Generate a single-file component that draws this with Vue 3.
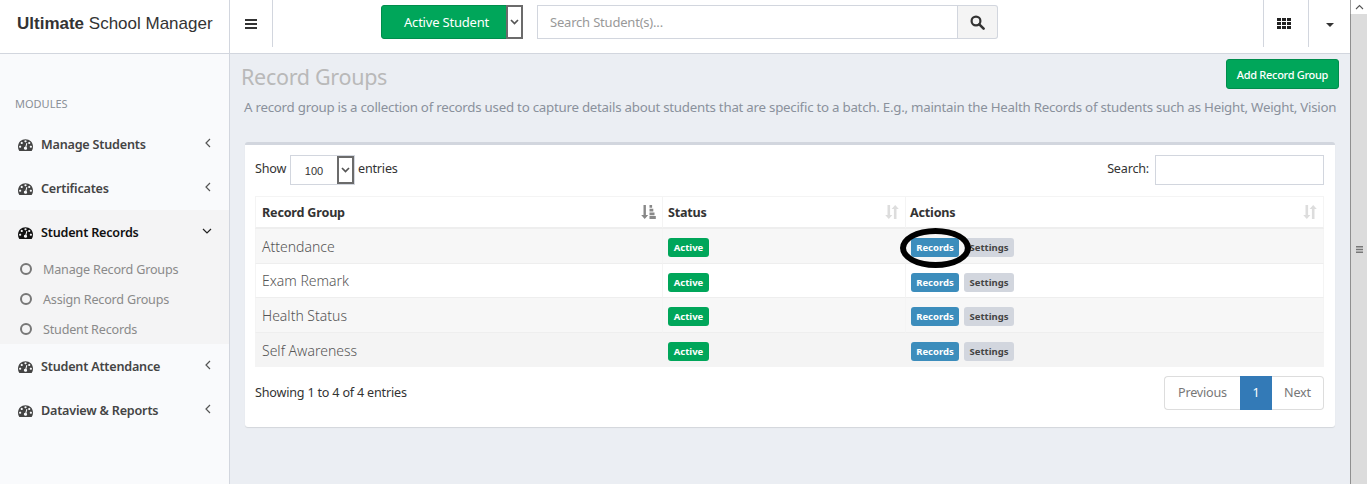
<script setup>
const gauge = "M384 1152q0-53-37.5-90.5t-90.5-37.5-90.5 37.5-37.5 90.5 37.5 90.5 90.5 37.5 90.5-37.5 37.5-90.5zm192-448q0-53-37.5-90.5t-90.5-37.5-90.5 37.5-37.5 90.5 37.5 90.5 90.5 37.5 90.5-37.5 37.5-90.5zm428 481l101-382q6-26-7.5-48.5t-38.5-29.5-48 6.5-30 39.5l-101 382q-60 5-107 43.5t-63 98.5q-20 77 20 146t117 89 146-20 89-117q16-60-6-117t-72-91zm660-33q0-53-37.5-90.5t-90.5-37.5-90.5 37.5-37.5 90.5 37.5 90.5 90.5 37.5 90.5-37.5 37.5-90.5zm-640-640q0-53-37.5-90.5t-90.5-37.5-90.5 37.5-37.5 90.5 37.5 90.5 90.5 37.5 90.5-37.5 37.5-90.5zm448 192q0-53-37.5-90.5t-90.5-37.5-90.5 37.5-37.5 90.5 37.5 90.5 90.5 37.5 90.5-37.5 37.5-90.5zm320 448q0 261-141 483-19 29-54 29h-1402q-35 0-54-29-141-221-141-483 0-182 71-348t191-286 286-191 348-71 348 71 286 191 191 286 71 348z"
const rows = ['Attendance', 'Exam Remark', 'Health Status', 'Self Awareness']
const before = ['Manage Students', 'Certificates']
const sub = ['Manage Record Groups', 'Assign Record Groups', 'Student Records']
const after = ['Student Attendance', 'Dataview & Reports']
</script>

<template>
  <div class="page">
    <div class="viewport">
      <header class="topbar">
        <div class="brand"><b>Ultimate</b> School Manager</div>
        <div class="toggle">
          <svg width="12" height="10" viewBox="0 0 12 10"><path d="M0 0h12v2H0zM0 4h12v2H0zM0 8h12v2H0z" fill="#333"/></svg>
        </div>
        <div class="filter">
          <div class="active-select">
            <span class="active-label">Active Student</span>
            <span class="arrow-box arrow-dark">
              <svg width="9" height="6" viewBox="0 0 9 6"><path d="M1 1l3.5 3.5L8 1" fill="none" stroke="#555" stroke-width="1.7"/></svg>
            </span>
          </div>
          <div class="search-group">
            <div class="search-input">Search Student(s)...</div>
            <div class="search-btn">
              <svg width="15" height="15" viewBox="0 0 15 15"><circle cx="6" cy="6" r="4.4" fill="none" stroke="#333" stroke-width="2.2"/><path d="M9.3 9.3l4.3 4.3" stroke="#333" stroke-width="2.6" stroke-linecap="round"/></svg>
            </div>
          </div>
        </div>
        <div class="top-right">
          <div class="top-cell apps">
            <svg width="14" height="11" viewBox="0 0 14 11"><path d="M0 0h4v3H0zM5 0h4v3H5zM10 0h4v3h-4zM0 4h4v3H0zM5 4h4v3H5zM10 4h4v3h-4zM0 8h4v3H0zM5 8h4v3H5zM10 8h4v3h-4z" fill="#222"/></svg>
          </div>
          <div class="top-cell user">
            <svg width="8" height="4" viewBox="0 0 8 4"><path d="M0 0h8L4 4z" fill="#333"/></svg>
          </div>
        </div>
      </header>

      <div class="body">
        <aside class="sidebar">
          <div class="modules">MODULES</div>
          <a v-for="m in before" :key="m" class="nav-item">
            <svg class="gauge" viewBox="0 0 1792 1792"><path :d="gauge" fill-rule="evenodd"/></svg>
            <span class="nav-label">{{ m }}</span>
            <svg class="chev" width="6" height="10" viewBox="0 0 6 10"><path d="M5 1L1 5l4 4" fill="none" stroke="#555" stroke-width="1.2"/></svg>
          </a>
          <div class="nav-open">
            <a class="nav-item current">
              <svg class="gauge" viewBox="0 0 1792 1792"><path :d="gauge" fill-rule="evenodd"/></svg>
              <span class="nav-label">Student Records</span>
              <svg class="chev" width="10" height="6" viewBox="0 0 10 6"><path d="M1 1l4 4 4-4" fill="none" stroke="#222" stroke-width="1.2"/></svg>
            </a>
            <a v-for="s in sub" :key="s" class="sub-item">
              <span class="ring"></span>
              <span>{{ s }}</span>
            </a>
          </div>
          <a v-for="m in after" :key="m" class="nav-item">
            <svg class="gauge" viewBox="0 0 1792 1792"><path :d="gauge" fill-rule="evenodd"/></svg>
            <span class="nav-label">{{ m }}</span>
            <svg class="chev" width="6" height="10" viewBox="0 0 6 10"><path d="M5 1L1 5l4 4" fill="none" stroke="#555" stroke-width="1.2"/></svg>
          </a>
        </aside>

        <main class="content">
          <div class="title-row">
            <h1 class="title">Record Groups</h1>
            <button class="add-btn">Add Record Group</button>
          </div>
          <p class="desc">A record group is a collection of records used to capture details about students that are specific to a batch. E.g., maintain the Health Records of students such as Height, Weight, Vision</p>

          <section class="box">
            <div class="controls">
              <div class="length">
                <span class="ctl-text show">Show</span>
                <div class="len-select">
                  <span class="len-value">100</span>
                  <span class="arrow-box">
                    <svg width="9" height="6" viewBox="0 0 9 6"><path d="M1 1l3.5 3.5L8 1" fill="none" stroke="#555" stroke-width="1.7"/></svg>
                  </span>
                </div>
                <span class="ctl-text">entries</span>
              </div>
              <div class="filter-box">
                <span class="ctl-text">Search:</span>
                <div class="filter-input"></div>
              </div>
            </div>

            <table class="table">
              <colgroup><col class="c1"><col class="c2"><col></colgroup>
              <thead>
                <tr>
                  <th>
                    <div class="th-in">Record Group
                      <svg class="sort" width="15" height="14" viewBox="0 0 15 14"><path d="M2.5 0h2.4v10h2.3L3.700 14 .2 10h2.300zM8.500 0h2.600v2.800H8.500zM8.500 3.700h3.800v2.800H8.500zM8.500 7.400h5v2.800h-5zM8.500 11.100h6.300v2.800H8.500z" fill="#888"/></svg>
                    </div>
                  </th>
                  <th>
                    <div class="th-in">Status
                      <svg class="sort" width="14" height="14" viewBox="0 0 14 14"><path d="M2.500 0h2.600v10H7.400l-3.600 4-3.600-4h2.300zM8.900 14V4H6.600L10.200 0l3.600 4h-2.300v10z" fill="#ddd"/></svg>
                    </div>
                  </th>
                  <th>
                    <div class="th-in">Actions
                      <svg class="sort" width="14" height="14" viewBox="0 0 14 14"><path d="M2.500 0h2.600v10H7.400l-3.600 4-3.600-4h2.300zM8.900 14V4H6.600L10.200 0l3.600 4h-2.300v10z" fill="#ddd"/></svg>
                    </div>
                  </th>
                </tr>
              </thead>
              <tbody>
                <tr v-for="(r, i) in rows" :key="r" :class="{ odd: i % 2 === 0, last: i === 3 }">
                  <td class="name">{{ r }}</td>
                  <td><span class="label green">Active</span></td>
                  <td>
                    <span class="label blue">Records<span v-if="i === 0" class="ellipse"></span></span>
                    <span class="label grey">Settings</span>
                  </td>
                </tr>
              </tbody>
            </table>

            <div class="foot">
              <span class="foot-text">Showing 1 to 4 of 4 entries</span>
              <div class="pager">
                <span class="pg prev">Previous</span>
                <span class="pg cur">1</span>
                <span class="pg next">Next</span>
              </div>
            </div>
          </section>
        </main>
      </div>
    </div>

    <div class="scrollbar">
      <div class="sb-up">
        <svg width="9" height="6" viewBox="0 0 9 6"><path d="M1 5l3.500-3.500L8 5" fill="none" stroke="#555" stroke-width="1.1"/></svg>
      </div>
      <div class="sb-thumb">
        <svg width="7" height="7" viewBox="0 0 7 7"><path d="M0 0h7v1.400H0zM0 2.800h7v1.400H0zM0 5.600h7V7H0z" fill="#777"/></svg>
      </div>
    </div>
  </div>
</template>

<style>
html, body { margin: 0; overflow: hidden; }
</style>

<style scoped>
.page { display: flex; width: 1367px; height: 484px; overflow: hidden; font-family: "Noto Sans", "Open Sans", sans-serif; font-size: 12.6px; letter-spacing: -0.2px; color: #333; }
.viewport { width: 1350px; display: flex; flex-direction: column; }
.topbar { height: 53px; display: flex; background: #fff; border-bottom: 1px solid #d2d6de; flex: none; }
.brand { width: 229px; border-right: 1px solid #d2d6de; font-family: "Liberation Sans", sans-serif; font-size: 17px; letter-spacing: 0; color: #333; line-height: 47px; text-indent: 17px; white-space: nowrap; }
.toggle { width: 42px; height: 47px; border-right: 1px solid #d2d6de; display: flex; align-items: center; justify-content: center; }
.filter { display: flex; margin: 5px 0 0 108px; gap: 14px; height: 34px; }
.active-select { width: 142px; box-sizing: border-box; background: #00a65a; border: 1px solid #008d4c; border-radius: 3px; display: flex; color: #fff; font-size: 13px; }
.active-label { flex: 1; text-align: center; line-height: 32px; padding-left: 5px; }
.arrow-box { width: 17px; box-sizing: border-box; background: #fff; border: 2px solid #6b6b6b; display: flex; align-items: center; justify-content: center; }
.arrow-dark { margin: -1px -1px -1px 0; }
.search-group { display: flex; width: 461px; }
.search-input { flex: 1; border: 1px solid #d2d6de; padding-left: 12px; line-height: 32px; color: #999; font-size: 13px; }
.search-btn { width: 40px; box-sizing: border-box; border: 1px solid #d2d6de; border-left: 0; background: #f4f4f4; border-radius: 0 3px 3px 0; display: flex; align-items: center; justify-content: center; }
.top-right { margin-left: auto; display: flex; }
.top-cell { height: 47px; border-left: 1px solid #d2d6de; display: flex; align-items: center; justify-content: center; }
.apps { width: 45px; padding-right: 4px; box-sizing: border-box; }
.user { width: 42px; padding-top: 3px; box-sizing: border-box; }
.body { flex: 1; display: flex; min-height: 0; }
.sidebar { width: 229px; flex: none; background: #f9fafc; border-right: 1px solid #d2d6de; }
.modules { margin-top: 41px; height: 27px; padding-left: 15px; font-size: 11px; letter-spacing: 0; line-height: 17px; color: #8a8f97; }
.nav-item { height: 44px; display: flex; align-items: center; padding: 0 18px; font-weight: 600; color: #444; }
.nav-item.current { color: #111; }
.gauge { width: 15px; height: 15px; fill: currentColor; margin-right: 8px; flex: none; }
.nav-label { flex: 1; white-space: nowrap; }
.chev { flex: none; margin-top: -2px; }
.nav-open { background: #f4f4f5; }
.nav-open .chev { margin-right: -1px; }
.sub-item { height: 30px; display: flex; align-items: center; padding-left: 20px; color: #8a8a8a; }
.ring { width: 12px; height: 12px; box-sizing: border-box; border: 2px solid #777; border-radius: 50%; margin-right: 11px; margin-top: -1px; flex: none; }
.content { flex: 1; background: #ebeef3; padding: 5px 11px 0 14px; min-width: 0; }
.title-row { display: flex; justify-content: space-between; height: 36px; }
.title { margin: 4px 0 0 -3px; font-size: 21.5px; letter-spacing: -0.3px; font-weight: 400; color: #b9b9b9; line-height: 28px; }
.add-btn { width: 113px; height: 30px; padding: 0; background: #00a65a; border: 1px solid #008d4c; border-radius: 3px; color: #fff; font: inherit; font-size: 11px; letter-spacing: -0.3px; font-weight: 500; }
.desc { margin: 0; padding-top: 2px; font-size: 13.3px; letter-spacing: -0.248px; line-height: 20px; color: #8a919c; white-space: nowrap; }
.box { width: 1090px; margin: 25px 0 0 1px; box-sizing: border-box; height: 285px; background: #fff; border-top: 3px solid #d2d6de; border-radius: 3px; box-shadow: 0 1px 1px rgba(0,0,0,.1); padding: 10px 11px 10px 10px; }
.controls { display: flex; justify-content: space-between; align-items: center; height: 30px; }
.length, .filter-box { display: flex; align-items: center; }
.ctl-text { margin-top: -3px; }
.show { width: 35px; }
.len-select { width: 65px; height: 30px; box-sizing: border-box; border: 1px solid #d2d6de; display: flex; margin-right: 3px; }
.len-value { flex: 1; text-align: center; font-size: 11px; letter-spacing: 0; line-height: 30px; font-family: "Liberation Sans", sans-serif; }
.filter-input { width: 167px; height: 28px; border: 1px solid #d2d6de; margin-left: 6px; }
.table { width: 1069px; margin-top: 11px; border-collapse: separate; border-spacing: 0; table-layout: fixed; }
.c1 { width: 407px; }
.c2 { width: 243px; }
th { height: 33px; padding: 0; text-align: left; border-top: 1px solid #f4f4f4; border-left: 1px solid #f4f4f4; border-bottom: 2px solid #eee; font-weight: 700; box-sizing: border-box; }
th:last-child { border-right: 1px solid #f4f4f4; }
.th-in { display: flex; justify-content: space-between; align-items: center; padding: 0 6px 0 5px; }
th:first-child .th-in { padding-left: 6px; }
th:last-child .th-in { padding-left: 4px; }
td { height: 34.5px; padding: 0 5px; border-left: 1px solid #f4f4f4; border-bottom: 1px solid #eee; box-sizing: border-box; letter-spacing: 0; }
td:first-child { padding-left: 6px; }
td:last-child { border-right: 1px solid #f4f4f4; }
tr.odd td { background: #f7f7f7; }
tr.last td { background: #f4f4f4; border-bottom: 0; }
.name { font-size: 14px; color: #555; font-weight: 300; padding-top: 1px; }
.label { display: inline-block; height: 19px; line-height: 19px; border-radius: 3px; font-size: 9.5px; font-weight: 700; color: #fff; vertical-align: middle; position: relative; text-align: center; margin-top: 4px; }
.green { background: #00a65a; width: 41px; }
.blue { background: #3c8dbc; width: 48px; }
.grey { background: #d2d6de; color: #444; margin-left: 5px; width: 50px; }
.ellipse { position: absolute; z-index: 2; left: -11px; top: -10px; width: 71px; height: 40px; box-sizing: border-box; border: 6px solid #000; border-radius: 50%; pointer-events: none; }
.foot { display: flex; justify-content: space-between; margin-top: 9px; align-items: center; height: 34px; }
.foot-text { margin-top: -2px; }
.pager { display: flex; }
.pg { height: 34px; box-sizing: border-box; line-height: 32px; border: 1px solid #ddd; text-align: center; color: #777; }
.prev { width: 76px; border-radius: 4px 0 0 4px; border-right: 0; }
.cur { width: 32px; background: #337ab7; border-color: #337ab7; color: #fff; }
.next { width: 52px; border-radius: 0 4px 4px 0; border-left: 0; }
.scrollbar { width: 17px; flex: none; display: flex; flex-direction: column; background: #f0f0f0; }
.sb-up { height: 14px; background: #fff; border-left: 1px solid #a0a0a0; display: flex; align-items: center; justify-content: center; }
.sb-thumb { flex: 1; background: #dcdcdc; border-left: 1px solid #8f8f8f; display: flex; align-items: center; justify-content: center; }
</style>
